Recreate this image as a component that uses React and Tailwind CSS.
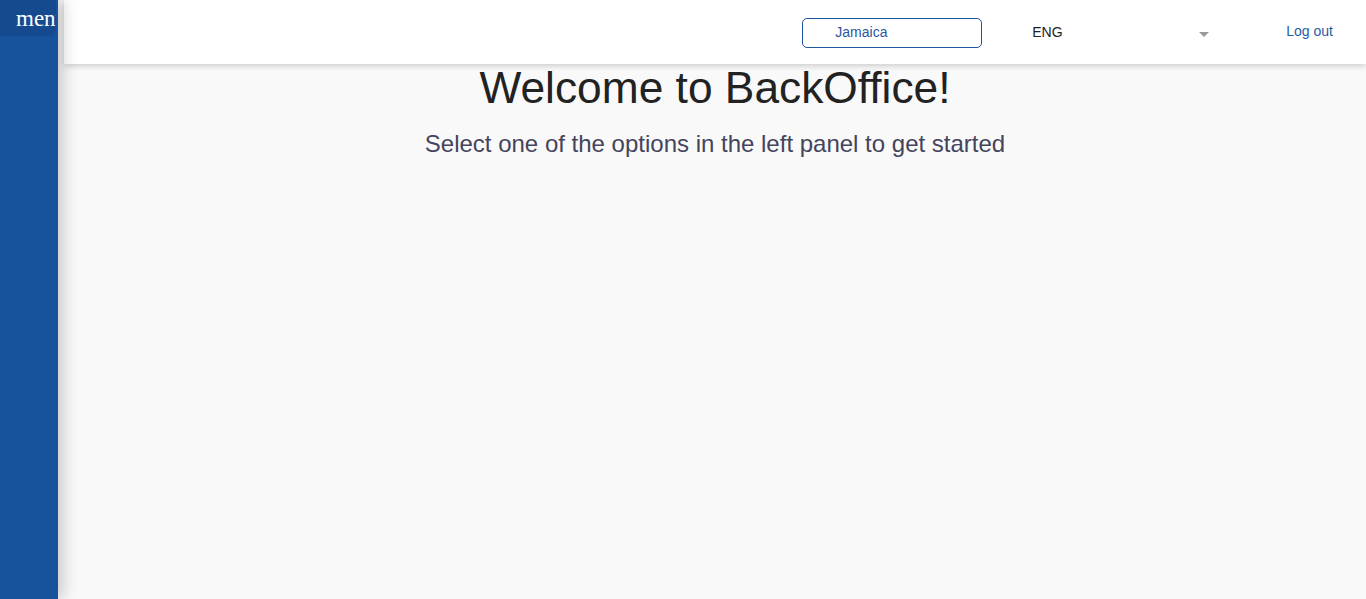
export default function App() {
  return (
    <div className="flex h-[599px] w-full overflow-hidden bg-[#f9f9f9]" style={{ fontFamily: '"Liberation Sans", Arial, sans-serif' }}>
      <aside className="relative z-20 h-full w-[58px] shrink-0 overflow-hidden bg-[#17529c] shadow-[4px_0_16px_rgba(0,0,0,0.22)]">
        <button className="flex h-[36px] w-[56px] items-center overflow-hidden whitespace-nowrap rounded-br-[6px] bg-[#154a8f] pl-[16px] text-[23px] leading-none text-white" style={{ fontFamily: '"Liberation Serif", "Times New Roman", serif' }}>
          menu
        </button>
      </aside>
      <div className="flex min-w-0 flex-1 flex-col pl-[6px]">
        <header className="relative z-10 flex h-[64px] shrink-0 items-center bg-white pr-[33px] pt-[2px] shadow-[0_2px_6px_rgba(0,0,0,0.18)]">
          <div className="ml-auto flex h-[30px] w-[180px] items-center rounded-[5px] border border-[#1c569e] pb-[2px] pl-[32px] text-[14px] text-[#2e55a0]">
            Jamaica
          </div>
          <div className="ml-[51px] -mt-[2px] flex w-[177px] items-center justify-between text-[14px] text-[#222]">
            <span className="-ml-[1px]">ENG</span>
            <svg width="10" height="5" viewBox="0 0 10 5" className="mr-[1px] mt-[4px]">
              <path d="M0 0 L10 0 L5 5 Z" fill="#9a9a9a" />
            </svg>
          </div>
          <a className="ml-[76px] -mt-[4px] text-[14px] text-[#1f5ca8]">Log out</a>
        </header>
        <main className="flex flex-col items-center">
          <h1 className="mt-[2px] text-[44.3px] leading-[44px] text-[#222]">Welcome to BackOffice!</h1>
          <p className="mt-[20px] text-[24px] leading-[28px] text-[#44445c]">Select one of the options in the left panel to get started</p>
        </main>
      </div>
    </div>
  );
}
